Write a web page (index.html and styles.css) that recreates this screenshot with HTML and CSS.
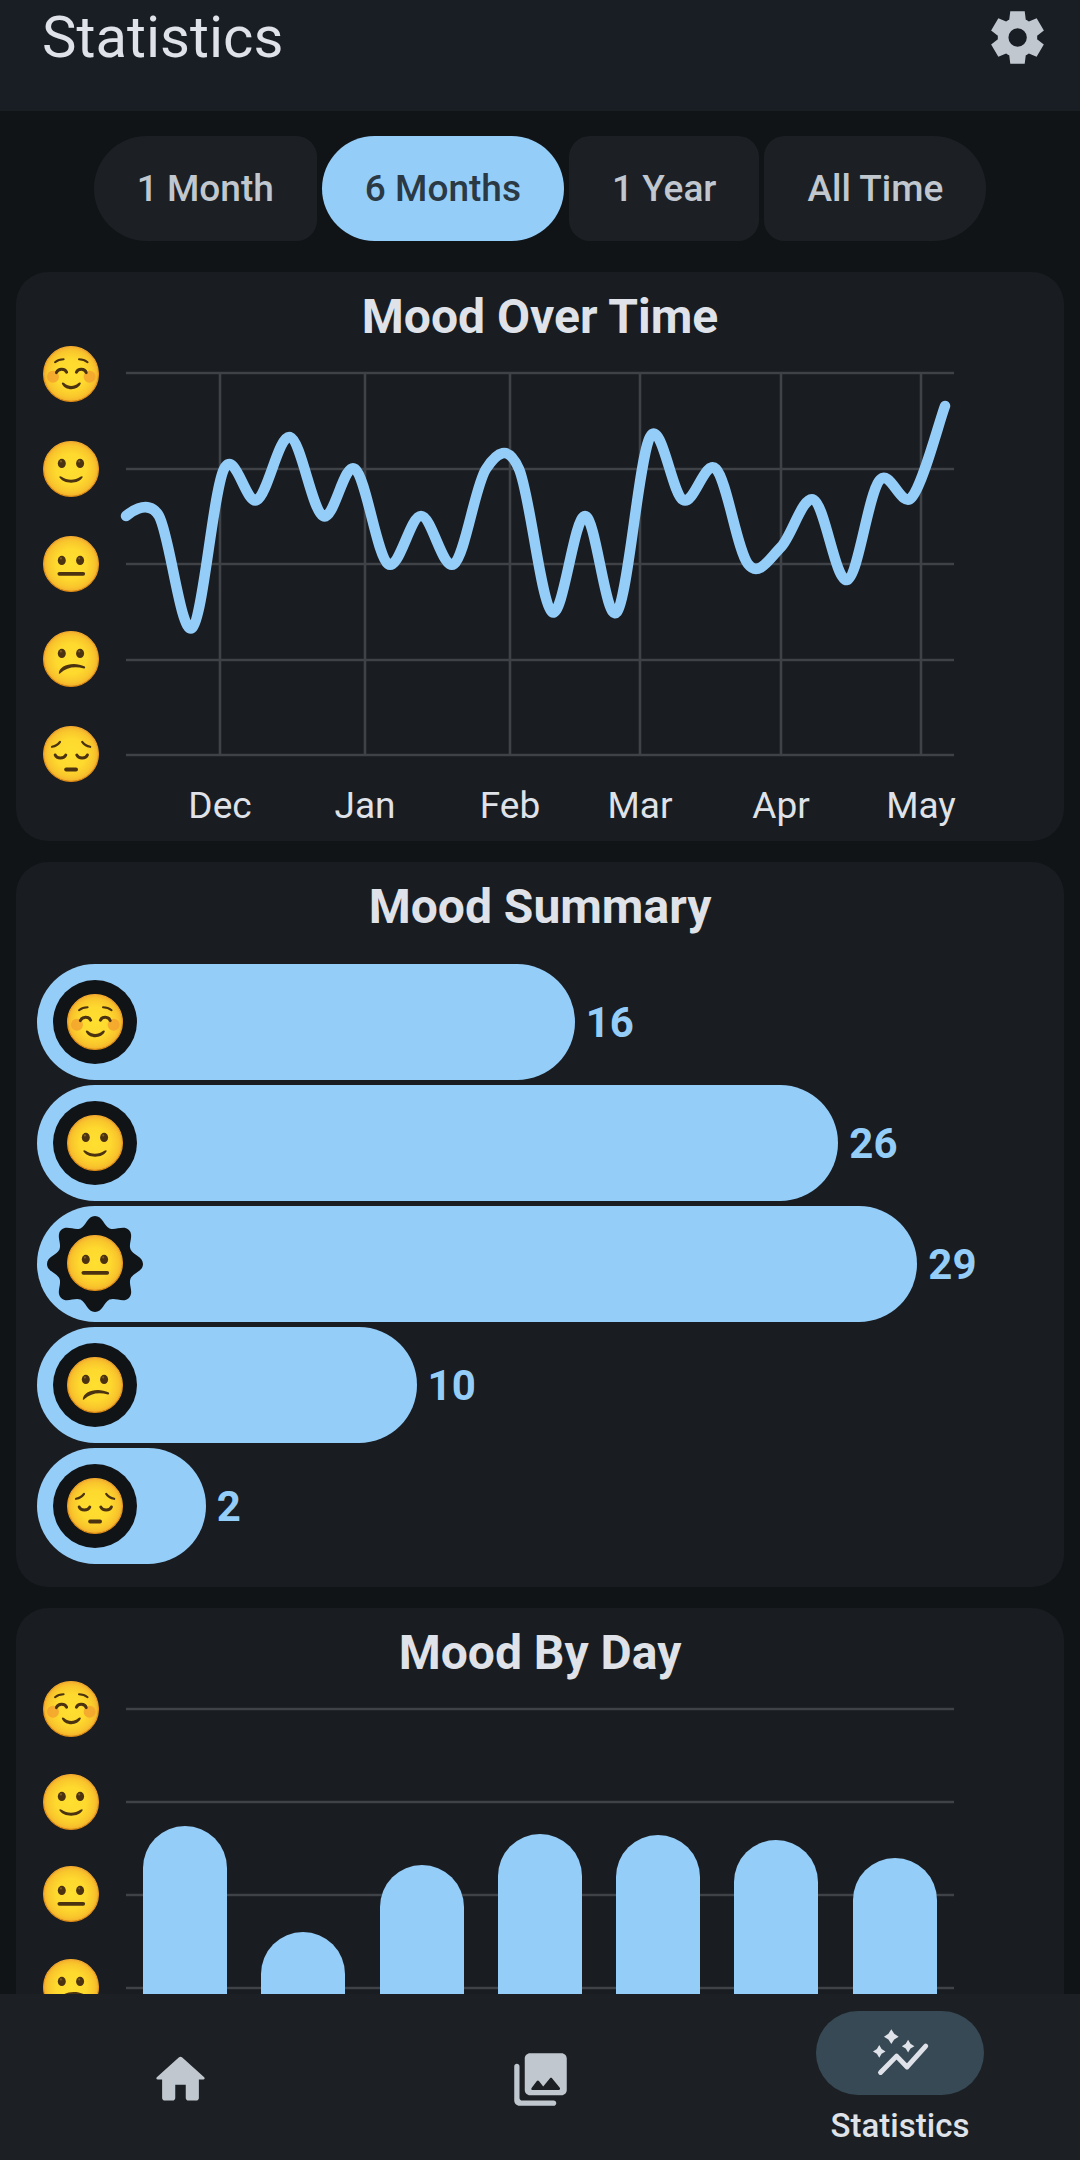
FILE: index.html
```html
<!DOCTYPE html>
<html lang="en">

<head>
    <meta charset="UTF-8">
    <meta name="viewport" content="width=device-width, initial-scale=1.0">
    <title>Statistics</title>
    <link rel="stylesheet" href="styles.css">
</head>

<body>

    <!-- mood faces, shared by all charts -->
    <svg class="sprite" aria-hidden="true">
        <defs>
            <radialGradient id="faceFill">
                <stop offset="0" stop-color="#ffdf30"/>
                <stop offset="0.55" stop-color="#fed92e"/>
                <stop offset="0.85" stop-color="#f9c62c"/>
                <stop offset="1" stop-color="#f4b02c"/>
            </radialGradient>
            <linearGradient id="faceRim" x1="0" y1="0" x2="0" y2="1">
                <stop offset="0" stop-color="#f2ab30"/>
                <stop offset="1" stop-color="#dc8a14"/>
            </linearGradient>
            <g id="face">
                <circle cx="28" cy="28" r="27.4" fill="url(#faceFill)" stroke="url(#faceRim)" stroke-width="1.2"/>
            </g>
            <g id="eyes" fill="#4b3210">
                <ellipse cx="18.8" cy="22.4" rx="4" ry="4.6"/>
                <ellipse cx="37.1" cy="22.4" rx="4" ry="4.6"/>
                <circle cx="17.9" cy="20.4" r="1.1" fill="#7d5c25"/>
                <circle cx="36.2" cy="20.4" r="1.1" fill="#7d5c25"/>
            </g>
            <symbol id="great" viewBox="0 0 56 56">
                <use href="#face"/>
                <g fill="#f4a22f" opacity="0.8">
                    <circle cx="10" cy="30.8" r="6"/>
                    <circle cx="46.6" cy="30.8" r="6"/>
                </g>
                <g fill="none" stroke="#4b3210" stroke-linecap="round">
                    <path stroke-width="2" d="M12 16.2Q15.5 13.2 20.6 13.2M36 13.2Q41 13.2 44.6 16.2"/>
                    <path stroke-width="3" d="M13.4 26.6C15 22.2 22 22 23.6 26.2M33.4 26.2C35 22 42 22.2 43.2 26.6"/>
                </g>
                <path fill="#4b3210" d="M18.8 37.4C19 36 20.5 36.4 21.4 37.2C25.5 40.8 31 40.8 35.2 37.2C36.3 36.2 37.8 36.2 37.8 37.6C35 45 21.5 45 18.8 37.4Z"/>
            </symbol>
            <symbol id="good" viewBox="0 0 56 56">
                <use href="#face"/>
                <use href="#eyes"/>
                <path fill="#4b3210" d="M16.2 36C16.6 34.8 17.6 35 18.6 35.8C24 39.6 32 39.6 37.4 35.8C38.6 35 39.6 35 39.8 36C36 43.6 20.4 43.6 16.2 36Z"/>
            </symbol>
            <symbol id="okay" viewBox="0 0 56 56">
                <use href="#face"/>
                <use href="#eyes" y="2"/>
                <path fill="none" stroke="#4b3210" stroke-width="3.8" stroke-linecap="round" d="M16.4 37.8H40.2"/>
            </symbol>
            <symbol id="bad" viewBox="0 0 56 56">
                <use href="#face"/>
                <use href="#eyes"/>
                <path fill="#4b3210" d="M15.8 42.4C16 34 31 29.8 41.8 35.6C42.6 36.6 42 37.6 41 37.4C31 35.2 24 36.4 17.2 42.2C16.6 43 15.8 43 15.8 42.4Z"/>
            </symbol>
            <symbol id="awful" viewBox="0 0 56 56">
                <use href="#face"/>
                <g fill="none" stroke="#4b3210" stroke-linecap="round">
                    <path stroke-width="2.2" d="M9 20.8Q14.4 19.6 17 15.8M39.2 15.8Q41.8 19.6 47.2 20.8"/>
                    <path stroke-width="3" d="M12.2 29C13.8 33 21 33 22.8 29M33.8 29C35.6 33 42.8 33 44.4 29"/>
                    <path stroke-width="4" d="M23.2 43.6H33"/>
                </g>
            </symbol>
            <path id="ray" d="M0 0L-14.7-35.5C-9-37.9-7.5-48 0-48S9-37.9 14.7-35.5Z"/>
        </defs>
    </svg>

    <header class="top-bar">
        <h1>Statistics</h1>
        <button type="button" class="icon-button" aria-label="Settings">
            <svg class="icon" viewBox="0 0 24 24"><path d="m9.25 22-.4-3.2q-.325-.125-.612-.3-.288-.175-.563-.375L4.7 19.375l-2.75-4.75 2.575-1.95Q4.5 12.5 4.5 12.338v-.675q0-.163.025-.338L1.95 9.375l2.75-4.75 2.975 1.25q.275-.2.575-.375.3-.175.6-.3l.4-3.2h5.5l.4 3.2q.325.125.613.3.287.175.562.375l2.975-1.25 2.75 4.75-2.575 1.95q.025.175.025.338v.674q0 .163-.05.338l2.575 1.95-2.75 4.75-2.95-1.25q-.275.2-.575.375-.3.175-.6.3l-.4 3.2Zm2.8-6.5q1.45 0 2.475-1.025Q15.55 13.45 15.55 12q0-1.45-1.025-2.475Q13.5 8.5 12.05 8.5q-1.475 0-2.488 1.025Q8.55 10.55 8.55 12q0 1.45 1.012 2.475Q10.575 15.5 12.05 15.5Z"/></svg>
        </button>
    </header>

    <main class="content">
        <div class="range-picker">
            <button type="button">1 Month</button>
            <button type="button" class="selected" aria-pressed="true">6 Months</button>
            <button type="button">1 Year</button>
            <button type="button">All Time</button>
        </div>

        <section class="card">
            <h2>Mood Over Time</h2>
            <svg class="chart" viewBox="0 1 1048 496">
                <path class="grid-line" d="M110 29H938M110 125H938M110 220H938M110 316H938M110 411H938"/>
                <path class="grid-line" d="M204 29V411M349 29V411M494 29V411M624 29V411M765 29V411M905 29V411"/>
                <use href="#great" x="27" y="2" width="56" height="56"/>
                <use href="#good" x="27" y="97" width="56" height="56"/>
                <use href="#okay" x="27" y="192" width="56" height="56"/>
                <use href="#bad" x="27" y="287" width="56" height="56"/>
                <use href="#awful" x="27" y="382" width="56" height="56"/>
                <path class="mood-line" d="M110 172C110 172 132 152 143 172S165 292 176 284S197 147 208 125S230 162 241 156S263 90 274 93S296 166 307 172S328 117 339 125S361 212 372 220S394 172 405 172S427 228 438 220S459 142 470 125S492 100 503 125S525 260 536 268S558 172 569 172S590 282 601 268S623 113 634 93S656 150 667 156S689 114 700 125S721 206 732 220S754 214 765 203S787 150 798 156S820 239 831 236S852 152 863 137S885 166 896 153S923 78 929 62"/>
                <g class="month-labels">
                    <text x="204" y="474">Dec</text>
                    <text x="349" y="474">Jan</text>
                    <text x="494" y="474">Feb</text>
                    <text x="624" y="474">Mar</text>
                    <text x="765" y="474">Apr</text>
                    <text x="905" y="474">May</text>
                </g>
            </svg>
        </section>

        <section class="card">
            <h2>Mood Summary</h2>
            <div class="summary">
                <div class="summary-row">
                    <div class="summary-bar" style="--count: 16"><span class="badge"><svg><use href="#great"/></svg></span></div>
                    <span>16</span>
                </div>
                <div class="summary-row">
                    <div class="summary-bar" style="--count: 26"><span class="badge"><svg><use href="#good"/></svg></span></div>
                    <span>26</span>
                </div>
                <div class="summary-row">
                    <div class="summary-bar" style="--count: 29">
                        <!-- most frequent mood gets the sun -->
                        <svg class="sun-badge" viewBox="-48 -48 96 96">
                            <circle r="38"/>
                            <use href="#ray"/>
                            <use href="#ray" transform="rotate(45)"/>
                            <use href="#ray" transform="rotate(90)"/>
                            <use href="#ray" transform="rotate(135)"/>
                            <use href="#ray" transform="rotate(180)"/>
                            <use href="#ray" transform="rotate(225)"/>
                            <use href="#ray" transform="rotate(270)"/>
                            <use href="#ray" transform="rotate(315)"/>
                            <use href="#okay" x="-28" y="-29" width="56" height="56"/>
                        </svg>
                    </div>
                    <span>29</span>
                </div>
                <div class="summary-row">
                    <div class="summary-bar" style="--count: 10"><span class="badge"><svg><use href="#bad"/></svg></span></div>
                    <span>10</span>
                </div>
                <div class="summary-row">
                    <div class="summary-bar" style="--count: 2"><span class="badge"><svg><use href="#awful"/></svg></span></div>
                    <span>2</span>
                </div>
            </div>
        </section>

        <section class="card">
            <h2>Mood By Day</h2>
            <svg class="chart" viewBox="0 1 1048 496">
                <path class="grid-line" d="M110 29H938M110 122H938M110 215H938M110 308H938M110 401H938"/>
                <use href="#great" x="27" y="1" width="56" height="56"/>
                <use href="#good" x="27" y="94" width="56" height="56"/>
                <use href="#okay" x="27" y="186" width="56" height="56"/>
                <use href="#bad" x="27" y="279" width="56" height="56"/>
                <use href="#awful" x="27" y="372" width="56" height="56"/>
                <g class="day-bars">
                    <rect x="127" y="146" width="84" height="255" rx="42"/>
                    <rect x="245" y="252" width="84" height="149" rx="42"/>
                    <rect x="364" y="185" width="84" height="216" rx="42"/>
                    <rect x="482" y="154" width="84" height="247" rx="42"/>
                    <rect x="600" y="155" width="84" height="246" rx="42"/>
                    <rect x="718" y="160" width="84" height="241" rx="42"/>
                    <rect x="837" y="178" width="84" height="223" rx="42"/>
                </g>
            </svg>
        </section>
    </main>

    <nav class="bottom-nav">
        <a href="#home" aria-label="Home">
            <svg class="icon" viewBox="0 0 24 24"><path d="M10 19v-5h4v5c0 .55.45 1 1 1h3c.55 0 1-.45 1-1v-7h1.7c.46 0 .68-.57.33-.87L12.67 3.6c-.38-.34-.96-.34-1.34 0l-8.36 7.53c-.34.3-.13.87.33.87H5v7c0 .55.45 1 1 1h3c.55 0 1-.45 1-1z"/></svg>
        </a>
        <a href="#gallery" aria-label="Gallery">
            <svg class="icon" viewBox="0 0 24 24"><path d="M22 16V4c0-1.1-.9-2-2-2H8c-1.1 0-2 .9-2 2v12c0 1.1.9 2 2 2h12c1.1 0 2-.9 2-2zm-10.6-3.47l1.63 2.18 2.58-3.22c.2-.25.58-.25.78 0l2.96 3.7c.26.33.03.81-.39.81H9c-.41 0-.65-.47-.4-.8l2-2.67c.2-.26.6-.26.8 0zM2 7v13c0 1.1.9 2 2 2h13c.55 0 1-.45 1-1s-.45-1-1-1H5c-.55 0-1-.45-1-1V7c0-.55-.45-1-1-1s-1 .45-1 1z"/></svg>
        </a>
        <a href="#statistics" class="active" aria-current="page">
            <span class="pill">
                <svg class="icon" viewBox="0 0 24 24">
                    <path fill="none" stroke="currentColor" stroke-width="1.9" stroke-linecap="round" stroke-linejoin="round" d="M4.4 19.2l6.1-6.2 4 4.1 7.1-7.9"/>
                    <path d="M8.5 2.8l1.1 1.7 1.7 1.1-1.7 1.1-1.1 1.7-1.1-1.7-1.7-1.1 1.7-1.1zM14.9 6.8l.9 1.5 1.5.9-1.5.9-.9 1.5-.9-1.5-1.5-.9 1.5-.9zM3.9 8.8l.9 1.5 1.5.9-1.5.9-.9 1.5-.9-1.5-1.5-.9 1.5-.9z"/>
                </svg>
            </span>
            <span>Statistics</span>
        </a>
    </nav>

</body>

</html>
```

FILE: styles.css
```css
body {
    background-color: #101417;
    color: #dfe2e8;
    font-family: Roboto, sans-serif;
    display: flex;
    flex-direction: column;
    height: 100vh;
    margin: 0;
}

h1,
h2 {
    margin: 0;
}

.sprite {
    position: absolute;
    width: 0;
    height: 0;
}

.icon {
    display: block;
    width: 63px;
    height: 63px;
    fill: currentColor;
}

.top-bar {
    display: flex;
    align-items: center;
    justify-content: space-between;
    flex-shrink: 0;
    box-sizing: border-box;
    padding: 0 31px 37px 42px;
    background-color: #191d24;
}

.top-bar h1 {
    font-size: 58px;
    font-weight: 400;
    line-height: 74px;
}

.icon-button {
    padding: 0;
    border: none;
    background: none;
    color: #c1c7cf;
    cursor: pointer;
}

.content {
    flex: 1;
    min-height: 0;
    overflow-y: auto;
    scrollbar-width: none;
    padding: 25px 16px 0;
}

.range-picker {
    display: flex;
    justify-content: center;
    gap: 5px;
    margin-bottom: 31px;
}

.range-picker button {
    height: 105px;
    padding: 0 43px;
    border: none;
    border-radius: 21px;
    background-color: #1c2024;
    color: #c1c7cf;
    font-family: inherit;
    font-size: 37px;
    font-weight: 500;
    cursor: pointer;
}

.range-picker button:first-child {
    border-radius: 53px 21px 21px 53px;
}

.range-picker button:last-child {
    border-radius: 21px 53px 53px 21px;
}

.range-picker .selected {
    border-radius: 53px;
    background-color: #95cdf9;
    color: #2a3943;
}

.card {
    margin-bottom: 21px;
    padding-top: 17px;
    border-radius: 32px;
    background-color: #191c20;
    overflow: hidden;
}

.card h2 {
    font-size: 48px;
    font-weight: 700;
    line-height: 56px;
    text-align: center;
}

.chart {
    display: block;
    width: 100%;
}

.grid-line {
    fill: none;
    stroke: #3f4246;
    stroke-width: 2.6;
}

.mood-line {
    fill: none;
    stroke: #95cdf9;
    stroke-width: 10.5;
    stroke-linecap: round;
    stroke-linejoin: round;
}

.month-labels {
    fill: #dfe2e8;
    font-size: 37px;
    text-anchor: middle;
}

.day-bars {
    fill: #95cdf9;
}

.summary {
    display: flex;
    flex-direction: column;
    gap: 5px;
    padding: 29px 21px 23px;
}

.summary-row {
    display: flex;
    align-items: center;
    gap: 11px;
    color: #95cdf9;
    font-size: 42px;
    font-weight: 700;
}

.summary-bar {
    display: flex;
    align-items: center;
    box-sizing: border-box;
    width: calc(116px + var(--count) * 2.62%);
    height: 116px;
    padding-left: 16px;
    border-radius: 58px;
    background-color: #95cdf9;
}

.badge {
    display: flex;
    align-items: center;
    justify-content: center;
    width: 84px;
    height: 84px;
    border-radius: 50%;
    background-color: #101417;
}

.badge svg {
    width: 56px;
    height: 56px;
}

.sun-badge {
    width: 96px;
    height: 96px;
    margin-left: -6px;
    fill: #101417;
}

.bottom-nav {
    display: flex;
    align-items: center;
    flex-shrink: 0;
    padding: 17px 0 13px;
    background-color: #1c2024;
}

.bottom-nav a {
    display: flex;
    flex: 1;
    flex-direction: column;
    align-items: center;
    gap: 10px;
    color: #c1c7cf;
    font-size: 33px;
    font-weight: 500;
    line-height: 42px;
    text-decoration: none;
}

.bottom-nav .active {
    color: #dfe2e8;
}

.pill {
    display: flex;
    align-items: center;
    justify-content: center;
    width: 168px;
    height: 84px;
    border-radius: 42px;
    background-color: #374955;
}
```
